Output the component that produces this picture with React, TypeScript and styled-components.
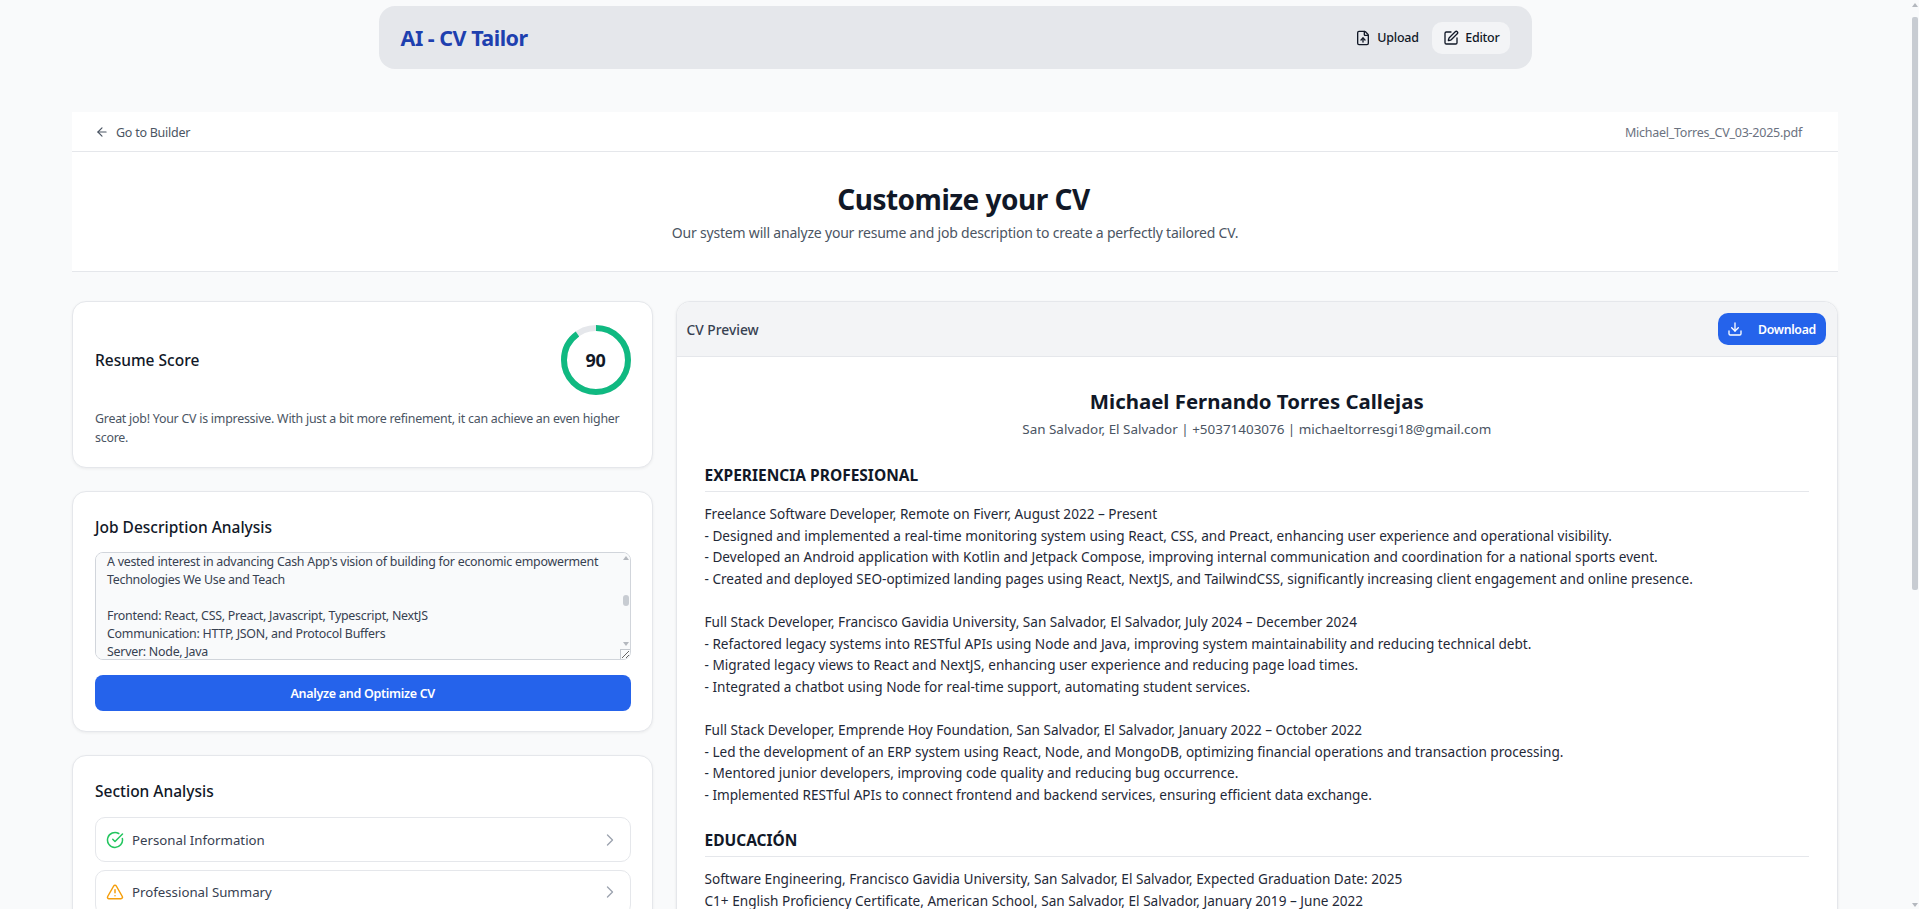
import React, { useLayoutEffect, useRef } from "react";
import styled, { createGlobalStyle } from "styled-components";
import { ArrowLeft, ChevronRight, CircleCheckBig, Download, FileUp, SquarePen, TriangleAlert } from "lucide-react";

const Global = createGlobalStyle`
  body { margin: 0; background: #f9fafb; color: #111827; font-family: "Noto Sans", "Open Sans", sans-serif; }
  * { box-sizing: border-box; }
`;

const Shell = styled.div`
  width: 100%;
  padding: 6px 9px 40px 0;
`;
const PageScrollbar = styled.div`
  position: fixed;
  top: 0;
  right: 0;
  bottom: 0;
  width: 10px;
  background: #f9fafb;
`;
const PageThumb = styled.div`
  position: absolute;
  top: 17px;
  left: 3px;
  width: 6px;
  height: 573px;
  border-radius: 2px;
  background: #c8ccd2;
`;
const Arrow = styled.div<{ $down?: boolean }>`
  position: absolute;
  ${(p) => (p.$down ? "bottom: 2px;" : "top: 3px;")}
  left: 3px;
  width: 0;
  height: 0;
  border-left: 3px solid transparent;
  border-right: 3px solid transparent;
  ${(p) => (p.$down ? "border-top: 4px solid #b4b8be;" : "border-bottom: 4px solid #b4b8be;")}
`;
const Header = styled.header`
  width: 1153px;
  height: 63px;
  margin: 0 auto;
  padding: 0 22px;
  display: flex;
  align-items: center;
  justify-content: space-between;
  background: #e5e7eb;
  border-radius: 16px;
`;
const Logo = styled.div`
  font-size: 21.5px;
  font-weight: 700;
  color: #1e40af;
  letter-spacing: -0.5px;
`;
const Nav = styled.nav`
  display: flex;
  gap: 3px;
`;
const NavButton = styled.div<{ $active?: boolean }>`
  height: 32px;
  padding: 0 10px 0 11px;
  display: flex;
  align-items: center;
  gap: 6.5px;
  font-size: 12.5px;
  font-weight: 500;
  letter-spacing: -0.25px;
  color: #111827;
  border-radius: 10px;
  background: ${(p) => (p.$active ? "#f3f4f6" : "transparent")};
`;
const Main = styled.main`
  width: 1766px;
  margin: 43px auto 0;
`;
const TopBar = styled.div`
  height: 40px;
  padding: 1px 36px 0 23px;
  display: flex;
  align-items: center;
  justify-content: space-between;
  background: #fff;
  border-bottom: 1px solid #e5e7eb;
`;
const BackLink = styled.div`
  display: flex;
  align-items: center;
  gap: 7px;
  font-size: 12.5px;
  color: #4b5563;
  letter-spacing: -0.25px;
`;
const FileName = styled.div`
  font-size: 12.5px;
  color: #6b7280;
  letter-spacing: -0.25px;
`;
const Hero = styled.section`
  height: 120px;
  padding-top: 27px;
  background: #fff;
  border-bottom: 1px solid #e5e7eb;
  text-align: center;
`;
const HeroTitle = styled.h1`
  margin: 0;
  padding-left: 17px;
  font-size: 28px;
  line-height: 40px;
  font-weight: 700;
  color: #111827;
  letter-spacing: -0.5px;
`;
const HeroText = styled.p`
  margin: 2px 0 0;
  font-size: 14px;
  line-height: 24px;
  color: #4b5563;
  letter-spacing: -0.2px;
`;
const Columns = styled.div`
  margin-top: 29px;
  display: grid;
  grid-template-columns: 580.5px 1fr;
  gap: 23px;
  align-items: start;
`;
const LeftColumn = styled.div`
  display: flex;
  flex-direction: column;
  gap: 23px;
`;
const Card = styled.section`
  padding: 23px 21px 20px 22px;
  background: #fff;
  border: 1px solid #e5e7eb;
  border-radius: 14px;
  box-shadow: 0 1px 3px rgba(0, 0, 0, 0.06);
`;
const ScoreTop = styled.div`
  display: flex;
  align-items: center;
  justify-content: space-between;
`;
const CardTitle = styled.h2`
  margin: 0;
  font-size: 15.5px;
  line-height: 24px;
  font-weight: 500;
  color: #111827;
`;
const Ring = styled.div`
  position: relative;
  width: 70px;
  height: 70px;
`;
const RingValue = styled.div`
  position: absolute;
  inset: 0;
  display: flex;
  align-items: center;
  justify-content: center;
  font-size: 18px;
  font-weight: 700;
  color: #111827;
  letter-spacing: -0.3px;
`;
const ScoreText = styled.p`
  margin: 15px 0 0;
  font-size: 12.4px;
  line-height: 18.5px;
  color: #4b5563;
  letter-spacing: -0.24px;
`;
const AreaWrap = styled.div`
  position: relative;
  margin-top: 13px;
  height: 108px;
`;
const JobArea = styled.textarea`
  display: block;
  width: 100%;
  height: 108px;
  padding: 0 11px;
  font-family: inherit;
  font-size: 12.4px;
  line-height: 18px;
  letter-spacing: -0.25px;
  color: #374151;
  background: #f9fafb;
  border: 1px solid #d1d5db;
  border-radius: 8px;
  outline: none;
`;
const AreaArrow = styled.div<{ $down?: boolean }>`
  position: absolute;
  ${(p) => (p.$down ? "bottom: 14px;" : "top: 4px;")}
  right: 2px;
  width: 0;
  height: 0;
  border-left: 3px solid transparent;
  border-right: 3px solid transparent;
  ${(p) => (p.$down ? "border-top: 4px solid #b4b8be;" : "border-bottom: 4px solid #b4b8be;")}
`;
const AreaThumb = styled.div`
  position: absolute;
  top: 43px;
  right: 2px;
  width: 6px;
  height: 11px;
  border-radius: 3px;
  background: #c8ccd2;
`;
const AreaCorner = styled.div`
  position: absolute;
  right: 1px;
  bottom: 1px;
  width: 10px;
  height: 10px;
  border-left: 1px solid #c4c8ce;
  border-top: 1px solid #c4c8ce;
  pointer-events: none;
`;
const PrimaryButton = styled.button`
  display: block;
  width: 100%;
  height: 36px;
  margin-top: 15px;
  border: 0;
  border-radius: 8px;
  background: #2563eb;
  color: #fff;
  font-family: inherit;
  font-size: 12.5px;
  font-weight: 600;
  letter-spacing: -0.3px;
`;
const SectionList = styled.div`
  margin-top: 14px;
  display: flex;
  flex-direction: column;
  gap: 7.5px;
`;
const SectionRow = styled.div`
  height: 45px;
  padding: 0 10px;
  display: flex;
  align-items: center;
  gap: 8px;
  border: 1px solid #e5e7eb;
  border-radius: 10px;
  font-size: 13.25px;
  color: #374151;
`;
const RowLabel = styled.span`
  flex: 1;
`;
const PreviewCard = styled.section`
  background: #fff;
  border: 1px solid #e5e7eb;
  border-radius: 14px;
  box-shadow: 0 1px 3px rgba(0, 0, 0, 0.08);
  overflow: hidden;
`;
const PreviewHeader = styled.div`
  height: 55px;
  padding: 0 11px 0 10px;
  display: flex;
  align-items: center;
  justify-content: space-between;
  background: #f3f4f6;
  border-bottom: 1px solid #e5e7eb;
`;
const PreviewLabel = styled.div`
  font-size: 13.8px;
  font-weight: 500;
  color: #374151;
`;
const DownloadButton = styled.div`
  width: 108px;
  height: 32px;
  padding: 0 9px;
  display: flex;
  align-items: center;
  gap: 15px;
  border-radius: 10px;
  background: #2563eb;
  color: #fff;
  font-size: 12.3px;
  font-weight: 600;
  letter-spacing: -0.3px;
`;
const Sheet = styled.article`
  padding: 29px 28px 40px;
  font-size: 13.6px;
  line-height: 21.6px;
  color: #1f2937;
`;
const CvName = styled.h2`
  margin: 0;
  text-align: center;
  font-size: 20.4px;
  line-height: 30px;
  font-weight: 700;
  color: #111827;
`;
const CvContact = styled.p`
  margin: 2px 0 0;
  text-align: center;
  font-size: 13.45px;
  line-height: 22px;
  color: #4b5563;
`;
const CvHeading = styled.h3`
  margin: 23px 0 0;
  padding-bottom: 4px;
  font-size: 15.5px;
  line-height: 24px;
  font-weight: 700;
  color: #111827;
  border-bottom: 1px solid #e5e7eb;
`;
const CvBody = styled.div`
  margin-top: 11px;
  white-space: pre-wrap;
`;

const job = `About the role
Cash App is looking for a Frontend Engineer to join our growing team.
You will build experiences used by millions of customers every day.

What you will do
Build product features across web surfaces
Work closely with design, product and backend teams
Write tests and maintain high code quality
Improve performance and reliability
Participate in code reviews
Mentor other engineers
Contribute to our design system
Take part in on-call rotations
Help shape technical direction

What we are looking for
Experience with modern web applications
Strong knowledge of JavaScript and CSS
Comfort working in large codebases
Good communication skills
A curiosity for financial products
A vested interest in advancing Cash App's vision of building for economic empowerment
Technologies We Use and Teach

Frontend: React, CSS, Preact, Javascript, Typescript, NextJS
Communication: HTTP, JSON, and Protocol Buffers
Server: Node, Java
Storage: MySQL, Redis
Cloud: AWS, Kubernetes
Tooling: Git, Webpack, Jest

Benefits
Competitive pay and equity
Health insurance
Flexible time off
Remote work options
Learning budget
Wellness stipend
Parental leave
Retirement plan

About Block
Block is one company built on many brands.
We believe in economic access for everyone.
We are an equal opportunity employer.
We welcome applicants from all backgrounds.
Thank you for your interest.`;

const experience = `Freelance Software Developer, Remote on Fiverr, August 2022 – Present
- Designed and implemented a real-time monitoring system using React, CSS, and Preact, enhancing user experience and operational visibility.
- Developed an Android application with Kotlin and Jetpack Compose, improving internal communication and coordination for a national sports event.
- Created and deployed SEO-optimized landing pages using React, NextJS, and TailwindCSS, significantly increasing client engagement and online presence.

Full Stack Developer, Francisco Gavidia University, San Salvador, El Salvador, July 2024 – December 2024
- Refactored legacy systems into RESTful APIs using Node and Java, improving system maintainability and reducing technical debt.
- Migrated legacy views to React and NextJS, enhancing user experience and reducing page load times.
- Integrated a chatbot using Node for real-time support, automating student services.

Full Stack Developer, Emprende Hoy Foundation, San Salvador, El Salvador, January 2022 – October 2022
- Led the development of an ERP system using React, Node, and MongoDB, optimizing financial operations and transaction processing.
- Mentored junior developers, improving code quality and reducing bug occurrence.
- Implemented RESTful APIs to connect frontend and backend services, ensuring efficient data exchange.`;

const education = `Software Engineering, Francisco Gavidia University, San Salvador, El Salvador, Expected Graduation Date: 2025
C1+ English Proficiency Certificate, American School, San Salvador, El Salvador, January 2019 – June 2022`;

const skills = `Languages: JavaScript, TypeScript, Java, Kotlin
Frontend: React, NextJS, Preact, TailwindCSS, CSS
Backend: Node, MongoDB, RESTful APIs
Tools: Git, Docker`;

const sections: { label: string; ok: boolean }[] = [
  { label: "Personal Information", ok: true },
  { label: "Professional Summary", ok: false },
  { label: "Work Experience", ok: true },
  { label: "Education", ok: true },
  { label: "Skills", ok: false },
  { label: "Projects", ok: false },
  { label: "Certifications", ok: true },
];

function ScoreRing({ value }: { value: number }) {
  const r = 32;
  const c = 2 * Math.PI * r;
  return (
    <Ring>
      <svg width="70" height="70" viewBox="0 0 70 70">
        <circle cx="35" cy="35" r={r} fill="none" stroke="#e5e7eb" strokeWidth="6" />
        <circle
          cx="35"
          cy="35"
          r={r}
          fill="none"
          stroke="#10b981"
          strokeWidth="6"
          strokeDasharray={`${(c * value) / 100} ${c}`}
          transform="rotate(-90 35 35)"
        />
      </svg>
      <RingValue>{value}</RingValue>
    </Ring>
  );
}

export default function App() {
  const area = useRef<HTMLTextAreaElement>(null);
  useLayoutEffect(() => {
    if (area.current) area.current.scrollTop = 378;
  }, []);
  return (
    <Shell>
      <Global />
      <Header>
        <Logo>AI - CV Tailor</Logo>
        <Nav>
          <NavButton>
            <FileUp size={16} />
            Upload
          </NavButton>
          <NavButton $active>
            <SquarePen size={16} />
            Editor
          </NavButton>
        </Nav>
      </Header>
      <Main>
        <TopBar>
          <BackLink>
            <ArrowLeft size={14} />
            Go to Builder
          </BackLink>
          <FileName>Michael_Torres_CV_03-2025.pdf</FileName>
        </TopBar>
        <Hero>
          <HeroTitle>Customize your CV</HeroTitle>
          <HeroText>Our system will analyze your resume and job description to create a perfectly tailored CV.</HeroText>
        </Hero>
        <Columns>
          <LeftColumn>
            <Card>
              <ScoreTop>
                <CardTitle>Resume Score</CardTitle>
                <ScoreRing value={90} />
              </ScoreTop>
              <ScoreText>Great job! Your CV is impressive. With just a bit more refinement, it can achieve an even higher score.</ScoreText>
            </Card>
            <Card>
              <CardTitle>Job Description Analysis</CardTitle>
              <AreaWrap>
                <JobArea ref={area} defaultValue={job} spellCheck={false} />
                <AreaArrow />
                <AreaThumb />
                <AreaArrow $down />
                <AreaCorner />
              </AreaWrap>
              <PrimaryButton>Analyze and Optimize CV</PrimaryButton>
            </Card>
            <Card>
              <CardTitle>Section Analysis</CardTitle>
              <SectionList>
                {sections.map((s) => (
                  <SectionRow key={s.label}>
                    {s.ok ? <CircleCheckBig size={18} color="#22c55e" /> : <TriangleAlert size={18} color="#f59e0b" />}
                    <RowLabel>{s.label}</RowLabel>
                    <ChevronRight size={20} strokeWidth={1.6} color="#9ca3af" />
                  </SectionRow>
                ))}
              </SectionList>
            </Card>
          </LeftColumn>
          <PreviewCard>
            <PreviewHeader>
              <PreviewLabel>CV Preview</PreviewLabel>
              <DownloadButton>
                <Download size={16} />
                Download
              </DownloadButton>
            </PreviewHeader>
            <Sheet>
              <CvName>Michael Fernando Torres Callejas</CvName>
              <CvContact>San Salvador, El Salvador | +50371403076 | michaeltorresgi18@gmail.com</CvContact>
              <CvHeading>EXPERIENCIA PROFESIONAL</CvHeading>
              <CvBody>{experience}</CvBody>
              <CvHeading>EDUCACIÓN</CvHeading>
              <CvBody>{education}</CvBody>
              <CvHeading>HABILIDADES</CvHeading>
              <CvBody>{skills}</CvBody>
            </Sheet>
          </PreviewCard>
        </Columns>
      </Main>
      <PageScrollbar>
        <Arrow />
        <PageThumb />
        <Arrow $down />
      </PageScrollbar>
    </Shell>
  );
}
